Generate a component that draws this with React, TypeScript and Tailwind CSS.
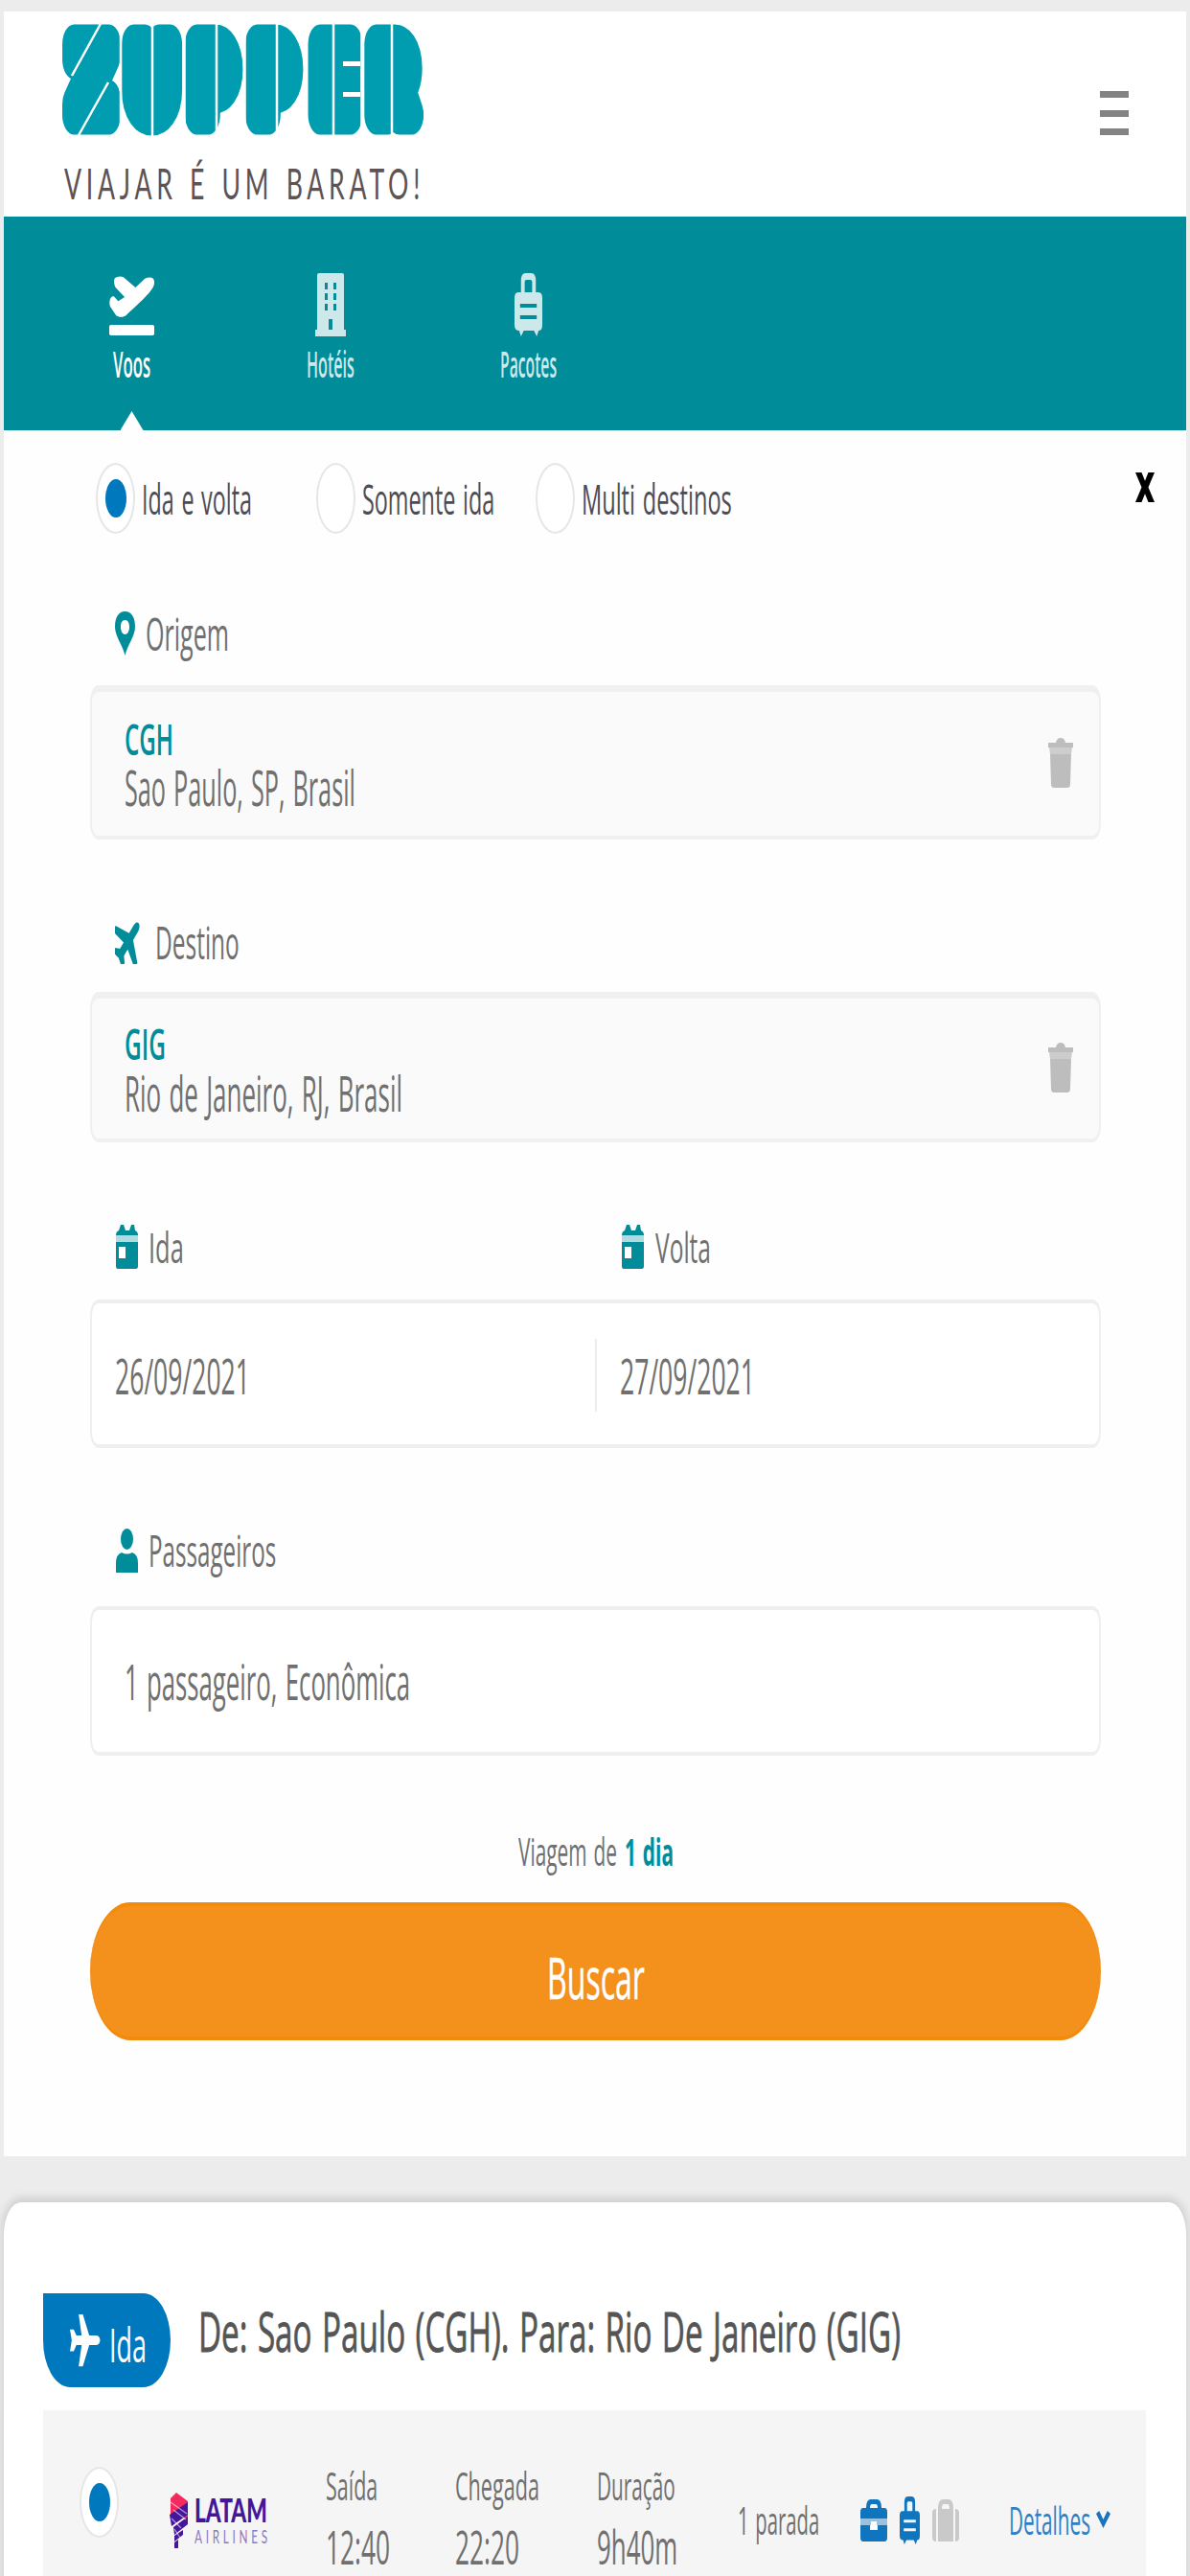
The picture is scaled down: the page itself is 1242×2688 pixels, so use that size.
import { useLayoutEffect, useRef, type ReactNode } from "react";
import clsx from "clsx";

interface ChildrenProps {
  className?: string;
  children: ReactNode;
}

// Condenses a line of text so that it fills the width of its box
function Fit({ className, children }: ChildrenProps) {
  const box = useRef<HTMLSpanElement>(null);
  const line = useRef<HTMLSpanElement>(null);

  useLayoutEffect(() => {
    if (!box.current || !line.current) return;
    const ratio = box.current.clientWidth / line.current.offsetWidth;
    line.current.style.transform = `scaleX(${ratio})`;
  }, [children]);

  return (
    <span className={clsx("block shrink-0", className)}>
      <span ref={line} className="inline-block origin-left whitespace-nowrap">
        {children}
      </span>
      <span ref={box} className="block h-0 w-full" />
    </span>
  );
}

interface IconProps extends ChildrenProps {
  viewBox: string;
}

function Icon({ viewBox, className, children }: IconProps) {
  return (
    <svg viewBox={viewBox} preserveAspectRatio="none" fill="currentColor" className={clsx("block shrink-0", className)}>
      {children}
    </svg>
  );
}

const PLANE =
  "M31.5 16c0 1.8-2 2.9-4.300 2.900h-6.700L14 31.500H9.800l3-12.600H7.500L4.800 22.500H1L2.800 16 1 9.500h3.800l2.700 3.600h5.300L9.800.5H14l6.500 12.600h6.700c2.300 0 4.300 1.100 4.300 2.900z";

function DepartureIcon() {
  return (
    <Icon viewBox="0 0 120 188" className="h-[63px] w-[47px]">
      <path d="M14 8C20 0 32 0 38 4L70 36 95 8C108 2 120 4 120 18 121 35 112 52 45 122 38 129 25 129 18 122L2 94C-2 74 6 60 13 64L24 78 41 66 17 36C13 28 12 16 14 8Z" />
      <rect y="152" width="120" height="33" rx="5" />
    </Icon>
  );
}

function HotelIcon() {
  return (
    <Icon viewBox="0 0 32 66" className="h-[66px] w-[32px]">
      <path
        fillRule="evenodd"
        d="M2 2q0-2 2-2h24q2 0 2 2v57h2v7H0v-7h2zM10 10v7h3v-7zM19 10v7h3v-7zM10 21v7h3v-7zM19 21v7h3v-7zM10 32v7h3v-7zM19 32v7h3v-7zM14 48v11h4V48z"
      />
    </Icon>
  );
}

function SuitcaseIcon({ className }: { className?: string }) {
  return (
    <Icon viewBox="0 0 30 66" className={className}>
      <path
        fillRule="evenodd"
        d="M7 20V8q0-8 5-8h6q5 0 5 8v12h3q4 0 4 6v28q0 6-4 6l-2 6-3-6H10l-3 6-2-6q-5 0-5-6V26q0-6 4-6zM11 20h8V9q0-2-2-2h-4q-2 0-2 2zM6 32v4h18v-4zM6 44v4h18v-4z"
      />
    </Icon>
  );
}

function CalendarIcon() {
  return (
    <Icon viewBox="0 0 23 48" className="h-[48px] w-[23px] text-[#008c99]">
      <path fillRule="evenodd" d="M0 19v25q0 3 2 3h19q2 0 2-3V19zM3 24h7v12H3z" />
      <path d="M0 12q0-4 3-5L5 1h3l2 6h4l2-6h3l1 6q3 1 3 5z" />
      <rect y="12" width="23" height="7" opacity=".3" />
    </Icon>
  );
}

function TrashIcon() {
  return (
    <Icon viewBox="0 0 26 52" className="h-[52px] w-[26px] text-[#bdbdbd]">
      <path d="M0 5h8q1-5 5-5t5 5h8v5H0z" />
      <path d="M1 10h24l-1 7H2z" opacity=".75" />
      <path d="M2 17h22l-1 31q0 4-3 4H6q-3 0-3-4z" />
    </Icon>
  );
}

function Logo() {
  return (
    <div className="flex flex-col">
      <svg viewBox="0 0 379 116" className="block h-[116px] w-[379px] overflow-visible">
        <text
          transform="scale(.6 1)"
          x="17 121 231 336 445 543"
          y="95"
          fontFamily="Inter, sans-serif"
          fontWeight="900"
          fontSize="102"
          fill="#009db0"
          stroke="#009db0"
          strokeWidth="41"
          strokeLinejoin="round"
        >
          ZUPPER
        </text>
        <path
          d="M42-2 11 54M49 61 17 118M95 0V118M162 0V118M225 0V118M284 0V118M345 0V118M62 0V118M128.500 0V118M191.500 0V118M255.500 0V118M313.500 0V118"
          stroke="#fff"
          strokeWidth="2.500"
        />
        <path d="M294 41.500h18M294 73.500h18" stroke="#fff" strokeWidth="5" />
      </svg>
      <Fit className="mt-[22px] ml-[3px] h-[56px] w-[376px] font-['Lato'] text-[45px] leading-[56px] tracking-[8px] text-[#5d5353]">
        VIAJAR É UM BARATO!
      </Fit>
    </div>
  );
}

function Radio({ checked }: { checked?: boolean }) {
  return (
    <span className="flex h-[74px] w-[41px] shrink-0 items-center justify-center rounded-[50%] border-2 border-[#e6e6e6] bg-white">
      {checked && <span className="h-[40px] w-[22px] rounded-[50%] bg-[#0078be]" />}
    </span>
  );
}

interface PlaceFieldProps {
  code: ReactNode;
  place: ReactNode;
  className?: string;
}

function PlaceField({ code, place, className }: PlaceFieldProps) {
  return (
    <div
      className={clsx(
        "flex items-center justify-between rounded-[9px/16px] border-x-2 border-t-[7px] border-b-4 border-[#f0f0f0] bg-[#fafafa] pr-[27px] pb-[3px] pl-[34px]",
        className
      )}
    >
      <div>
        {code}
        {place}
      </div>
      <TrashIcon />
    </div>
  );
}

function FlightTime({ label, value, className }: { label: ReactNode; value: ReactNode; className?: string }) {
  return (
    <div className={clsx("mb-[11px] shrink-0 text-[#707070]", className)}>
      {label}
      {value}
    </div>
  );
}

export default function App() {
  return (
    <div className="flex h-[2688px] w-[1242px] flex-col overflow-hidden bg-[#ececec] px-1 pt-3 font-['Open_Sans','Noto_Sans',sans-serif] text-[#707070] [word-spacing:3px]">
      <header className="flex h-[214px] shrink-0 justify-between bg-white pt-[13px] pr-[60px] pl-[60px]">
        <Logo />
        <div className="mt-[70px] flex h-[46px] w-[30px] flex-col justify-between">
          <span className="h-[7px] bg-[#838383]" />
          <span className="h-[7px] bg-[#838383]" />
          <span className="h-[7px] bg-[#838383]" />
        </div>
      </header>

      <nav className="flex h-[223px] shrink-0 bg-[#008c99] pl-[30px] text-white">
        <div className="flex w-[207px] flex-col items-center pt-[62px]">
          <DepartureIcon />
          <Fit className="mt-[6px] h-[46px] w-[39px] text-[37px] leading-[46px] font-semibold">Voos</Fit>
          <span className="mt-auto h-[20px] w-[24px] bg-white [clip-path:polygon(50%_0,100%_100%,0_100%)]" />
        </div>
        <div className="flex w-[207px] flex-col items-center pt-[59px] text-[#cce8eb]">
          <HotelIcon />
          <Fit className="mt-[6px] h-[46px] w-[50px] text-[37px] leading-[46px] font-semibold">Hotéis</Fit>
        </div>
        <div className="flex w-[206px] flex-col items-center pt-[59px] text-[#cce8eb]">
          <SuitcaseIcon className="h-[66px] w-[29px]" />
          <Fit className="mt-[6px] h-[46px] w-[59px] text-[37px] leading-[46px] font-semibold">Pacotes</Fit>
        </div>
      </nav>

      <main className="h-[1801px] shrink-0 bg-[#fefefe]">
        <div className="flex h-[142px] items-center pr-[33px] pl-[96px] text-[44px] leading-[56px] text-[#4c4c55]">
          <label className="flex w-[230px] items-center gap-[7px]">
            <Radio checked />
            <Fit className="w-[115px]">Ida e volta</Fit>
          </label>
          <label className="flex w-[229px] items-center gap-[7px]">
            <Radio />
            <Fit className="w-[138px]">Somente ida</Fit>
          </label>
          <label className="flex items-center gap-[7px]">
            <Radio />
            <Fit className="w-[157px]">Multi destinos</Fit>
          </label>
          <Icon viewBox="0 0 20 34" className="mb-[24px] ml-auto h-[33px] w-[20px] text-black">
            <path d="M0 1h6.500l3.500 9 3.500-9H20l-6.500 16L20 33h-6.500L10 24 6.500 33H0l6.500-16z" />
          </Icon>
        </div>

        <div className="pr-[89px] pl-[90px]">
          <div className="flex h-[124px] items-center pt-[16px] pl-[26px] text-[47px] leading-[60px]">
            <Icon viewBox="0 0 21 46" className="mr-[11px] h-[46px] w-[21px] text-[#008c99]">
              <path
                fillRule="evenodd"
                d="M10.500 46C8 35 0 26 0 16 0 6 4 0 10.500 0S21 6 21 16c0 10-8 19-10.500 30zM10.500 9C7.500 9 6 12 6 16s1.500 8 4.500 8S15 20 15 16s-1.500-7-4.500-7z"
              />
            </Icon>
            <Fit className="w-[87px]">Origem</Fit>
          </div>
          <PlaceField
            className="h-[161px]"
            code={<Fit className="h-[50px] w-[51px] text-[45px] leading-[50px] font-semibold text-[#008c99]">CGH</Fit>}
            place={<Fit className="h-[50px] w-[241px] text-[51px] leading-[50px]">Sao Paulo, SP, Brasil</Fit>}
          />

          <div className="flex h-[159px] items-center pt-[55px] pl-[26px] text-[47px] leading-[60px]">
            <Icon viewBox="3 3 26 26" className="mr-[15px] h-[46px] w-[27px] text-[#008c99]">
              <path d={PLANE} transform="rotate(-45 16 16)" />
            </Icon>
            <Fit className="w-[88px]">Destino</Fit>
          </div>
          <PlaceField
            className="h-[157px]"
            code={<Fit className="h-[53px] w-[43px] text-[45px] leading-[53px] font-semibold text-[#008c99]">GIG</Fit>}
            place={<Fit className="h-[50px] w-[290px] text-[51px] leading-[50px]">Rio de Janeiro, RJ, Brasil</Fit>}
          />

          <div className="flex h-[164px] items-center pt-[54px] pl-[27px] text-[44px] leading-[60px]">
            <div className="flex w-[528px] items-center gap-[11px]">
              <CalendarIcon />
              <Fit className="w-[37px]">Ida</Fit>
            </div>
            <div className="flex items-center gap-[12px]">
              <CalendarIcon />
              <Fit className="w-[58px]">Volta</Fit>
            </div>
          </div>
          <div className="flex h-[155px] items-center rounded-[9px/16px] border-x-2 border-y-[4px] border-[#efefef] bg-white pt-[3px] pl-[24px] text-[52px] leading-[60px]">
            <Fit className="w-[141px]">26/09/2021</Fit>
            <span className="ml-[360px] h-[76px] w-[2px] bg-[#ececec]" />
            <Fit className="ml-[24px] w-[141px]">27/09/2021</Fit>
          </div>

          <div className="flex h-[165px] items-center pt-[50px] pl-[27px] text-[46px] leading-[60px]">
            <Icon viewBox="0 0 23 46" className="mr-[11px] mb-[2px] h-[46px] w-[23px] text-[#008c99]">
              <ellipse cx="11.500" cy="11" rx="6.500" ry="11" />
              <path d="M0 46V36q0-9 6-11 5.500 3 11 0 6 2 6 11v10z" />
            </Icon>
            <Fit className="-mt-[3px] w-[133px]">Passageiros</Fit>
          </div>
          <div className="flex h-[156px] items-center rounded-[9px/16px] border-x-2 border-y-[4px] border-[#efefef] bg-white pl-[34px] text-[51px] leading-[60px]">
            <Fit className="w-[298px]">1 passageiro, Econômica</Fit>
          </div>

          <div className="flex h-[153px] items-center justify-center gap-[8px] pt-[47px] text-[40px] leading-[50px]">
            <Fit className="w-[103px]">Viagem de</Fit>
            <Fit className="w-[51px] font-bold text-[#008c99]">1 dia</Fit>
          </div>
          <button className="flex h-[144px] w-full items-center justify-center rounded-[42px/72px] border-y-[4px] border-[#f28a0c] bg-[#f3911c] pt-[11px] text-[61px] leading-[80px] text-white [-webkit-text-stroke:0.5px]">
            <Fit className="w-[102px]">Buscar</Fit>
          </button>
        </div>
      </main>

      <section className="mt-[48px] h-[420px] shrink-0 rounded-t-[18px_34px] bg-white px-[41px] pt-[95px] shadow-[0_-3px_8px_2px_rgba(0,0,0,0.12)]">
        <div className="flex h-[98px]">
          <div className="flex w-[133px] shrink-0 items-center rounded-[0_30px_30px_30px/0_52px_52px_52px] bg-[#0078be] pl-[27px] text-white">
            <Icon viewBox="0 0 32 32" className="mr-[9px] h-[56px] w-[33px]">
              <path d={PLANE} />
            </Icon>
            <Fit className="mt-[8px] w-[39px] text-[49px] leading-[60px]">Ida</Fit>
          </div>
          <Fit className="mt-[1px] ml-[29px] w-[733px] text-[57px] leading-[76px] text-[#555] [-webkit-text-stroke:0.8px]">
            De: Sao Paulo (CGH). Para: Rio De Janeiro (GIG)
          </Fit>
        </div>

        <div className="mt-[24px] flex h-[230px] w-[1151px] items-center bg-[#f5f5f5] pl-[38px]">
          <div className="mb-[38px]">
            <Radio checked />
          </div>
          <div className="ml-[53px] flex w-[163px] shrink-0 gap-[6px]">
            <Icon viewBox="0 0 20 58" className="h-[58px] w-[20px]">
              <path d="M1 6 7 0l12 9v19L1 22z" fill="#f5295d" />
              <path d="M0 23 19 10v13L2 35zM4 36l15-11v8L5 44zM5 45l9-6v5l-9 7zM5 52l4-3v9H5z" fill="#45159a" />
              <path d="m1 10 17 12M4 18l13 10M2 27l10 10M5 38l6 9" stroke="#f5f5f5" strokeWidth="1.200" opacity=".6" />
            </Icon>
            <div>
              <Fit className="h-[36px] w-[76px] font-['Lato'] text-[34px] leading-[36px] font-black text-[#45159a]">
                LATAM
              </Fit>
              <Fit className="h-[20px] w-[80px] font-['Lato'] text-[19px] leading-[20px] tracking-[6px] text-[#8d78c2]">
                AIRLINES
              </Fit>
            </div>
          </div>
          <FlightTime
            className="w-[135px]"
            label={<Fit className="w-[54px] text-[41px] leading-[64px]">Saída</Fit>}
            value={<Fit className="w-[67px] text-[49px] leading-[64px]">12:40</Fit>}
          />
          <FlightTime
            className="w-[148px]"
            label={<Fit className="w-[88px] text-[41px] leading-[64px]">Chegada</Fit>}
            value={<Fit className="w-[67px] text-[49px] leading-[64px]">22:20</Fit>}
          />
          <FlightTime
            className="w-[147px]"
            label={<Fit className="w-[82px] text-[41px] leading-[64px]">Duração</Fit>}
            value={<Fit className="w-[84px] text-[49px] leading-[64px]">9h40m</Fit>}
          />
          <Fit className="-mt-[3px] w-[85px] text-[41px] leading-[60px]">1 parada</Fit>
          <div className="ml-[43px] flex items-center text-[#0f75bf]">
            <Icon viewBox="0 0 28 44" className="h-[44px] w-[28px]">
              <path fillRule="evenodd" d="M6 9q0-9 5-9h6q5 0 5 9h3q3 0 3 4v7H0v-7q0-4 3-4zM10 9h8q0-4-2-4h-4q-2 0-2 4z" />
              <path d="M0 20h28v7H0z" opacity=".4" />
              <path d="M0 27h10v5h8v-5h10v13q0 4-3 4H3q-3 0-3-4z" />
              <path d="M11 23h6v8h-6z" fill="#fff" />
            </Icon>
            <SuitcaseIcon className="ml-[13px] h-[50px] w-[21px]" />
            <Icon viewBox="0 0 28 44" className="ml-[13px] h-[44px] w-[28px] text-[#c9c9c9]">
              <path d="M0 14q0-4 4-4v34q-4 0-4-4zM28 14q0-4-4-4v34q4 0 4-4z" />
              <path fillRule="evenodd" d="M6 10q0-10 5-10h6q5 0 5 10v34H6zM10 10h8q0-5-2-5h-4q-2 0-2 5z" />
            </Icon>
          </div>
          <Fit className="-mt-[3px] ml-[52px] w-[85px] text-[41px] leading-[60px] text-[#2f7fc5]">Detalhes</Fit>
          <Icon viewBox="0 0 14 18" className="mb-[2px] ml-[6px] h-[18px] w-[15px] text-[#1a74bd]">
            <path d="M0 3 3 0l4 9 4-9 3 3-7 15z" />
          </Icon>
        </div>
      </section>
    </div>
  );
}
